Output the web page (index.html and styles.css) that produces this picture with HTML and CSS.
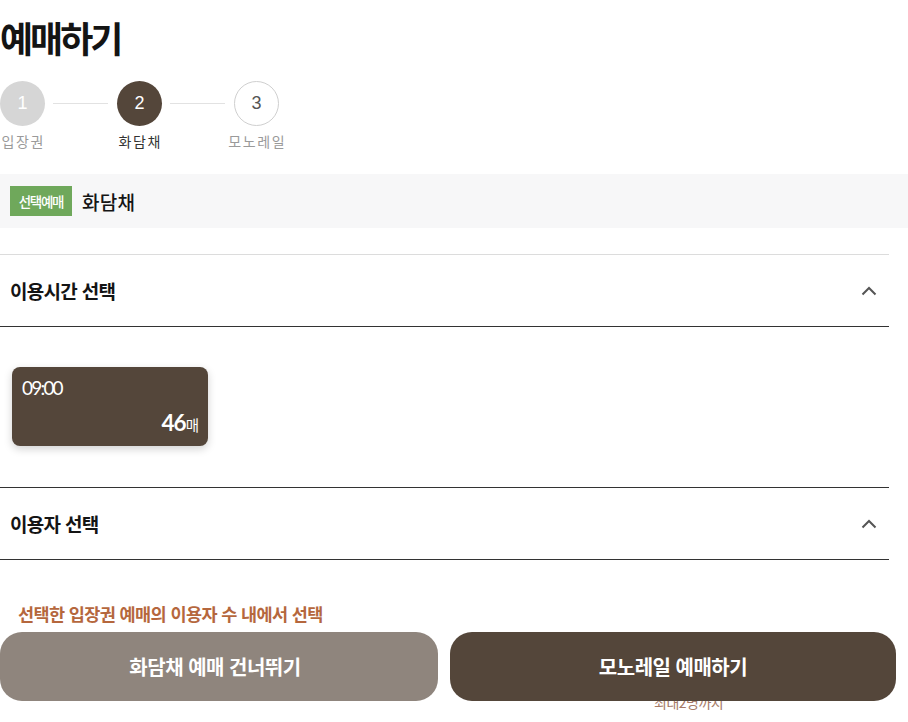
FILE: index.html
```html
<!DOCTYPE html>
<html lang="ko">
<head>
<meta charset="utf-8">
<link rel="stylesheet" href="styles.css">
</head>
<body>
<div class="page">
  <h1 class="title">예매하기</h1>
  <div class="steps">
    <div class="step done"><span class="circle">1</span><span class="label">입장권</span></div>
    <span class="connector"></span>
    <div class="step active"><span class="circle">2</span><span class="label">화담채</span></div>
    <span class="connector"></span>
    <div class="step todo"><span class="circle">3</span><span class="label">모노레일</span></div>
  </div>
  <div class="band">
    <span class="badge">선택예매</span>
    <span class="band-name">화담채</span>
  </div>
  <div class="sections">
    <section class="sec first">
      <div class="sec-head">
        <h2>이용시간 선택</h2>
        <svg class="chev" width="16" height="10" viewBox="0 0 16 10"><path d="M1.5 8.5 L8 2 L14.5 8.5" fill="none" stroke="#555" stroke-width="2"/></svg>
      </div>
      <div class="sec-body times">
        <div class="slot">
          <span class="slot-time">09:00</span>
          <span class="slot-count"><b>46</b>매</span>
        </div>
      </div>
    </section>
    <section class="sec">
      <div class="sec-head">
        <h2>이용자 선택</h2>
        <svg class="chev" width="16" height="10" viewBox="0 0 16 10"><path d="M1.5 8.5 L8 2 L14.5 8.5" fill="none" stroke="#555" stroke-width="2"/></svg>
      </div>
      <div class="sec-body users">
        <p class="notice">선택한 입장권 예매의 이용자 수 내에서 선택</p>
        <p class="max">최대2명까지</p>
      </div>
    </section>
  </div>
</div>
<div class="actions">
  <button class="btn skip">화담채 예매 건너뛰기</button>
  <button class="btn next">모노레일 예매하기</button>
</div>
</body>
</html>
```
FILE: styles.css
```css
* { box-sizing: border-box; }
html, body { margin: 0; padding: 0; background: #fff; }
body {
  font-family: "Noto Sans CJK KR", "Noto Sans", sans-serif;
  color: #111;
  overflow: hidden;
  height: 722px;
}
.page { width: 908px; }
.title {
  margin: 0;
  padding-top: 12px;
  font-size: 36px;
  line-height: 50px;
  font-weight: 700;
  letter-spacing: -3px;
  color: #141414;
}
.steps {
  display: flex;
  align-items: flex-start;
  margin-top: 19px;
  height: 93px;
}
.step {
  width: 45px;
  display: flex;
  flex-direction: column;
  align-items: center;
}
.circle {
  width: 45px;
  height: 45px;
  border-radius: 50%;
  display: flex;
  align-items: center;
  justify-content: center;
  font-family: "Liberation Sans", Arial, sans-serif;
  font-size: 18px;
  color: #fff;
}
.done .circle { background: #d6d6d6; }
.active .circle { background: #54463a; }
.todo .circle { background: #fff; border: 1px solid #cfcfcf; color: #555; }
.label {
  margin-top: 5px;
  white-space: nowrap;
  font-size: 14px;
  line-height: 20px;
  color: #9a9a9a;
  letter-spacing: 1.6px;
  text-indent: 1.6px;
}
.active .label { color: #333; }
.connector {
  width: 55px;
  height: 1px;
  background: #e2e2e2;
  margin: 22px 9px 0 8px;
}
.band {
  height: 54px;
  background: #f7f7f8;
  display: flex;
  align-items: center;
  padding-left: 10px;
}
.badge {
  width: 62px;
  height: 30px;
  background: #6fa85b;
  color: #fff;
  font-size: 13.5px;
  font-weight: 500;
  letter-spacing: -1.3px;
  display: flex;
  align-items: center;
  justify-content: center;
}
.band-name {
  margin-left: 10px;
  font-size: 19px;
  font-weight: 500;
  letter-spacing: 0.3px;
  color: #151515;
}
.sections { width: 889px; margin-top: 26px; }
.sec-head {
  height: 72px;
  display: flex;
  align-items: center;
  justify-content: space-between;
  padding: 0 12px 0 10px;
  border-bottom: 1px solid #333;
}
.first .sec-head { border-top: 1px solid #dcdcdc; height: 73px; }
.sec-head h2 {
  margin: 0;
  font-size: 19px;
  font-weight: 700;
  letter-spacing: -0.7px;
  color: #141414;
}
.sec-body.times {
  padding: 40px 0 41px 12px;
  border-bottom: 1px solid #333;
}
.slot {
  width: 196px;
  height: 79px;
  background: #54463a;
  border-radius: 8px;
  box-shadow: 0 3px 8px rgba(0,0,0,0.18);
  color: #fff;
  padding: 8px 9px 0 10px;
  display: flex;
  flex-direction: column;
}
.slot-time {
  font-family: "Lato", "Noto Sans", sans-serif;
  font-weight: 400;
  font-size: 19px;
  letter-spacing: -1.8px;
  line-height: 26px;
}
.slot-count {
  align-self: flex-end;
  margin-top: 10px;
  font-size: 14.5px;
  line-height: 24px;
}
.slot-count b {
  font-family: "Lato", "Noto Sans", sans-serif;
  font-size: 22.5px;
  font-weight: 700;
  letter-spacing: -1px;
}
.sec-body.users { padding-top: 40px; }
.notice {
  margin: 0 0 0 18px;
  font-size: 17.5px;
  font-weight: 700;
  letter-spacing: -0.6px;
  line-height: 28px;
  color: #b5673d;
}
.max {
  margin: 64px 0 0 654px;
  font-size: 14px;
  color: #a67a66;
  letter-spacing: -0.5px;
}
.actions {
  position: fixed;
  left: 0;
  bottom: 21px;
  display: flex;
  gap: 12px;
}
.btn {
  height: 69px;
  border: 0;
  border-radius: 22px;
  color: #fff;
  font-family: "Noto Sans CJK KR", "Noto Sans", sans-serif;
  font-size: 20px;
  font-weight: 700;
  letter-spacing: -0.5px;
  padding: 0;
}
.skip { width: 438px; background: #8f857d; padding-right: 8px; }
.next { width: 446px; background: #54463a; }
```
